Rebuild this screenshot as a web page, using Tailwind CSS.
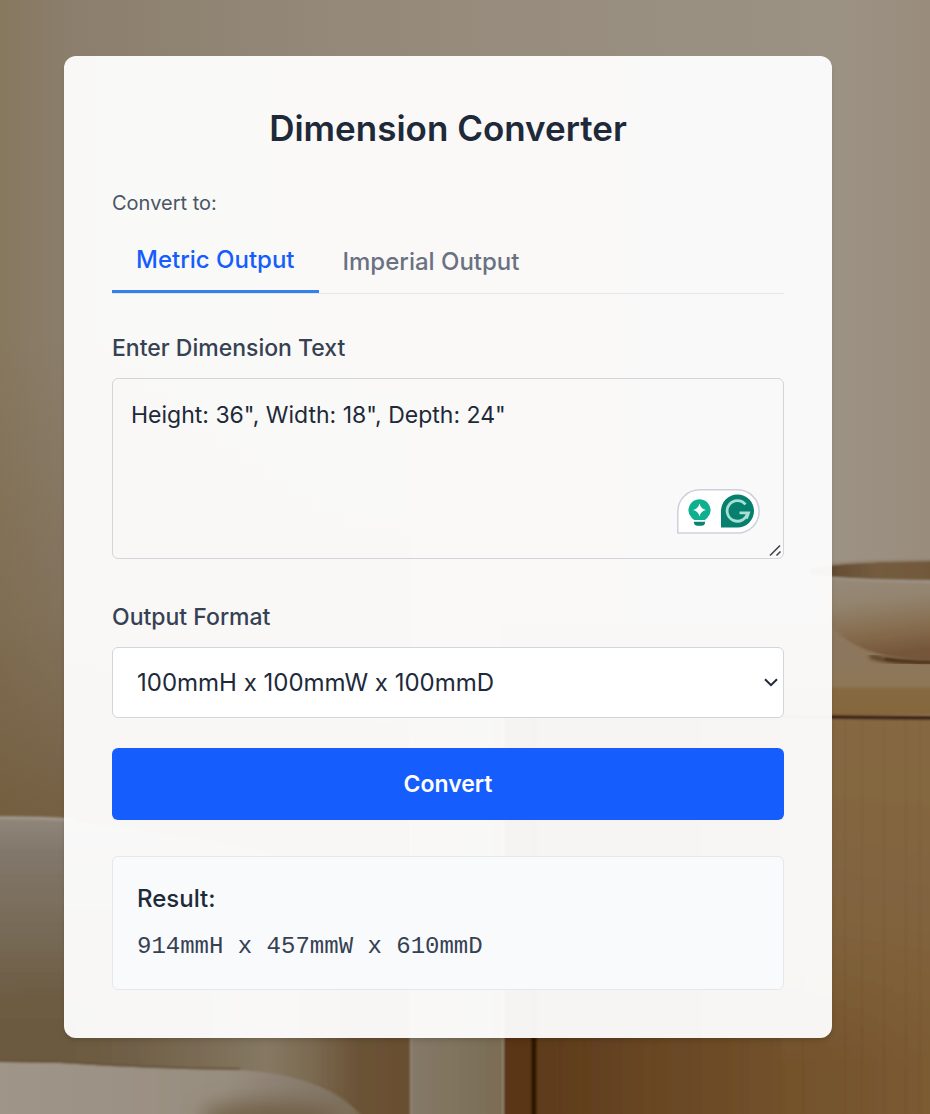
<!DOCTYPE html>
<html lang="en">
<head>
<meta charset="utf-8">
<meta name="viewport" content="width=device-width, initial-scale=1">
<title>Dimension Converter</title>
<script src="https://cdn.jsdelivr.net/npm/@tailwindcss/browser@4"></script>
</head>
<body class="relative isolate min-h-screen overflow-x-hidden bg-[#94897b] font-['Inter',sans-serif] text-[#1e2939]">
<!-- Room scene behind the card -->
<svg class="absolute inset-0 -z-10 h-full w-full" viewBox="0 0 930 1114" preserveAspectRatio="xMidYMid slice" aria-hidden="true">
  <defs>
    <linearGradient id="wall" x1="0" y1="0" x2="1" y2="0">
      <stop offset="0" stop-color="#87785f"/><stop offset=".07" stop-color="#8b7e6c"/><stop offset=".35" stop-color="#948979"/><stop offset=".9" stop-color="#9c9284"/><stop offset="1" stop-color="#998c7d"/>
    </linearGradient>
    <linearGradient id="wallShade" x1="0" y1="0" x2="0" y2="1">
      <stop offset=".3" stop-color="#6e5636" stop-opacity="0"/><stop offset=".55" stop-color="#6e5636" stop-opacity=".3"/><stop offset=".73" stop-color="#6e5636" stop-opacity=".75"/>
    </linearGradient>
    <linearGradient id="chair" x1="0" y1="0" x2="0" y2="1">
      <stop offset="0" stop-color="#90867a"/><stop offset=".12" stop-color="#81776a"/><stop offset=".35" stop-color="#786b57"/><stop offset=".6" stop-color="#6d5b42"/><stop offset="1" stop-color="#6b593e"/>
    </linearGradient>
    <linearGradient id="chairSide" gradientUnits="userSpaceOnUse" x1="0" y1="0" x2="410" y2="0">
      <stop offset="0" stop-color="#6c5b42" stop-opacity="0"/><stop offset=".16" stop-color="#6c5b42" stop-opacity=".2"/><stop offset=".38" stop-color="#76674f" stop-opacity=".8"/><stop offset=".65" stop-color="#867862"/><stop offset=".76" stop-color="#7b6a51"/><stop offset=".87" stop-color="#6b5337"/><stop offset="1" stop-color="#694f31"/>
    </linearGradient>
    <linearGradient id="seat" gradientUnits="userSpaceOnUse" x1="0" y1="0" x2="375" y2="0">
      <stop offset="0" stop-color="#9f9589"/><stop offset=".6" stop-color="#988e80"/><stop offset=".85" stop-color="#85786a"/><stop offset="1" stop-color="#76664e"/>
    </linearGradient>
    <linearGradient id="gap" x1="0" y1="0" x2="1" y2="0">
      <stop offset="0" stop-color="#857a68"/><stop offset="1" stop-color="#7b6c54"/>
    </linearGradient>
    <linearGradient id="wood" x1="0" y1="0" x2="1" y2="0">
      <stop offset="0" stop-color="#5b391a"/><stop offset=".35" stop-color="#694724"/><stop offset=".65" stop-color="#73522c"/><stop offset="1" stop-color="#7c5c33"/>
    </linearGradient>
    <linearGradient id="woodLight" x1="0" y1="0" x2="0" y2="1">
      <stop offset="0" stop-color="#866943"/><stop offset=".5" stop-color="#826540" stop-opacity=".9"/><stop offset=".85" stop-color="#80613a" stop-opacity="0"/>
    </linearGradient>
    <linearGradient id="top" x1="0" y1="0" x2="0" y2="1">
      <stop offset="0" stop-color="#8c7860"/><stop offset=".68" stop-color="#8d7758"/><stop offset=".72" stop-color="#876942"/><stop offset="1" stop-color="#86663d"/>
    </linearGradient>
    <linearGradient id="bowl" x1="0" y1="0" x2=".15" y2="1">
      <stop offset="0" stop-color="#9a8e7e"/><stop offset=".45" stop-color="#93846f"/><stop offset=".8" stop-color="#84694a"/><stop offset="1" stop-color="#75563a"/>
    </linearGradient>
    <linearGradient id="rim" x1="0" y1="0" x2="1" y2="0">
      <stop offset="0" stop-color="#5b452c"/><stop offset=".5" stop-color="#745c3f"/><stop offset="1" stop-color="#72593b"/>
    </linearGradient>
    <filter id="soft"><feGaussianBlur stdDeviation="1"/></filter>
    <filter id="shade"><feGaussianBlur stdDeviation="2"/></filter>
    <filter id="haze" x="-30%" y="-60%" width="160%" height="220%"><feGaussianBlur stdDeviation="10"/></filter>
  </defs>
  <rect width="930" height="1114" fill="url(#wall)"/>
  <rect width="410" height="1114" fill="url(#wallShade)"/>
  <g filter="url(#soft)">
    <path d="M-10 817 Q70 816 170 835 Q380 860 410 960 V1130 H-10Z" fill="url(#chair)"/>
    <path d="M-10 980 H410 V1130 H-10Z" fill="url(#chairSide)"/>
    <path d="M-10 818 Q30 817 75 820" fill="none" stroke="#a1988d" stroke-width="3"/>
    <path d="M-10 1062 L60 1063 Q150 1069 240 1070 Q340 1076 372 1130 H-10Z" fill="url(#seat)"/>
    <path d="M-10 1061 L60 1062 Q150 1068 240 1069" fill="none" stroke="#685337" stroke-width="2"/>
    <rect x="410" y="700" width="93" height="430" fill="url(#gap)"/>
    <path d="M411 700V1130M503 700V1130" stroke="#968775" stroke-width="1.5"/>
    <rect x="504" y="716" width="440" height="414" fill="url(#wood)"/>
    <rect x="780" y="716" width="164" height="414" fill="url(#woodLight)"/>
    <rect x="504" y="716" width="28" height="414" fill="#5a3415"/>
    <path d="M534 716V1130" stroke="#2b1406" stroke-width="5"/>
    <rect x="500" y="624" width="444" height="91" fill="url(#top)"/>
    <path d="M500 714 L940 718" stroke="#3d2112" stroke-width="4"/>
  </g>
  <ellipse cx="270" cy="1118" rx="70" ry="18" fill="#6d5a40" fill-opacity=".8" filter="url(#haze)"/>
  <path d="M870 656 Q890 663 940 663" fill="none" stroke="#3e240e" stroke-width="3" filter="url(#shade)"/>
  <g filter="url(#soft)">
    <path d="M820 572 Q820 626 850 642 Q880 660 940 661 V562 H850Z" fill="url(#bowl)"/>
    <path d="M885 659 Q905 662 940 662" fill="none" stroke="#482b13" stroke-width="2"/>
    <path d="M810 568 Q860 561 940 561 V580 Q860 580 810 575Z" fill="url(#rim)"/>
    <path d="M810 576 Q860 581 940 582" fill="none" stroke="#9e9486" stroke-width="2"/>
    <path d="M810 566 Q860 560 940 560" fill="none" stroke="#92846f" stroke-width="2"/>
  </g>
  <!-- Wood grain -->
  <g stroke="#50300f" stroke-opacity=".05" stroke-width="2" filter="url(#soft)">
    <path d="M560 720V1114M584 720V1114M622 720V1114M655 720V1114M690 720V1114M727 720V1114M742 720V1114M780 720V1114M803 720V1114M845 720V1114M862 720V1114M884 720V1114M906 720V1114M920 720V1114"/>
  </g>
</svg>

<main class="pt-14 pr-[98px] pb-[76px] pl-16">
  <section class="rounded-xl bg-white/95 p-12 shadow-md">
    <h1 class="text-center text-[35px] leading-[48px] font-semibold">Dimension Converter</h1>
    <p class="mt-9 text-xl leading-[30px] text-[#4a5565]">Convert to:</p>

    <div role="tablist" class="mt-3 flex border-b border-gray-200 text-2xl leading-9 font-medium">
      <button type="button" role="tab" aria-selected="true" class="border-b-3 border-[#3580ee] px-6 py-3 text-[#155dfc]">Metric Output</button>
      <button type="button" role="tab" aria-selected="false" class="px-6 text-[#6a7282]">Imperial Output</button>
    </div>

    <label for="dimensions" class="mt-9 block text-[23px] leading-9 font-medium text-[#364153]">Enter Dimension Text</label>
    <div class="relative mt-3">
      <textarea id="dimensions" spellcheck="false" class="block h-[181px] w-full resize-none rounded-md border border-gray-300 p-[18px] text-[23px] leading-9">Height: 36", Width: 18", Depth: 24"</textarea>
      <button type="button" aria-label="Writing assistant" class="absolute right-6 bottom-[25px]">
        <svg width="83" height="45" viewBox="0 0 83 45" fill="none">
          <path d="M.8 44V22.5A21.7 21.7 0 0 1 22.5.8H60.5A21.6 21.6 0 0 1 60.5 44Z" fill="#fff" stroke="#cfcfdc" stroke-width="1.5"/>
          <path d="M22.500 10.200A11 11 0 0 0 14.800 29Q17 30.800 17.300 31H27.700Q28 30.800 30.200 29A11 11 0 0 0 22.500 10.200Z" fill="#0fb08f"/>
          <path d="M22.500 14.500Q23.700 19.800 29 21Q23.700 22.200 22.500 27.500Q21.300 22.200 16 21Q21.300 19.800 22.500 14.500Z" fill="#fff"/>
          <path d="M16.800 32.700H28.200Q28 36.800 24.500 36.800H20.500Q17 36.800 16.800 32.700Z" fill="#07846f"/>
          <path d="M44 38.500V22A16.500 16.500 0 1 1 60.500 38.500Z" fill="#057f6e"/>
          <path d="M68.500 15.500A10.300 10.300 0 1 0 70.600 23.500M62.500 23.800H71.500L69.500 29.500" stroke="#a9dfd3" stroke-width="2.800"/>
        </svg>
      </button>
      <svg class="pointer-events-none absolute right-0.5 bottom-0.5" width="13" height="13" viewBox="0 0 13 13" fill="none" aria-hidden="true">
        <path d="M1 11.500 11 1.500M7.500 11.500 11.500 7.500" stroke="#444" stroke-width="1.600"/>
      </svg>
    </div>

    <label for="format" class="mt-10 block text-[23px] leading-9 font-medium text-[#364153]">Output Format</label>
    <div class="relative mt-3">
      <select id="format" class="block h-[71px] w-full appearance-none rounded-md border border-gray-300 bg-white px-6 text-2xl leading-9">
        <option>100mmH x 100mmW x 100mmD</option>
      </select>
      <svg class="pointer-events-none absolute top-[31px] right-1.5" width="14" height="9" viewBox="0 0 14 9" fill="none" aria-hidden="true">
        <path d="M1 1.200 7 7.200 13 1.200" stroke="#1e2939" stroke-width="2"/>
      </svg>
    </div>

    <button type="button" class="mt-[30px] block h-[72px] w-full rounded-md bg-[#155dfc] text-[23px] leading-9 font-semibold text-white">Convert</button>

    <div class="mt-9 flex flex-col gap-3 rounded-md border border-gray-200 bg-[#f9fafb] p-6 leading-9">
      <h2 class="text-2xl leading-9 font-medium">Result:</h2>
      <output for="dimensions format" class="font-['Liberation_Mono',monospace] text-2xl leading-9 text-[#364153]">914mmH x 457mmW x 610mmD</output>
    </div>
  </section>
</main>
</body>
</html>
